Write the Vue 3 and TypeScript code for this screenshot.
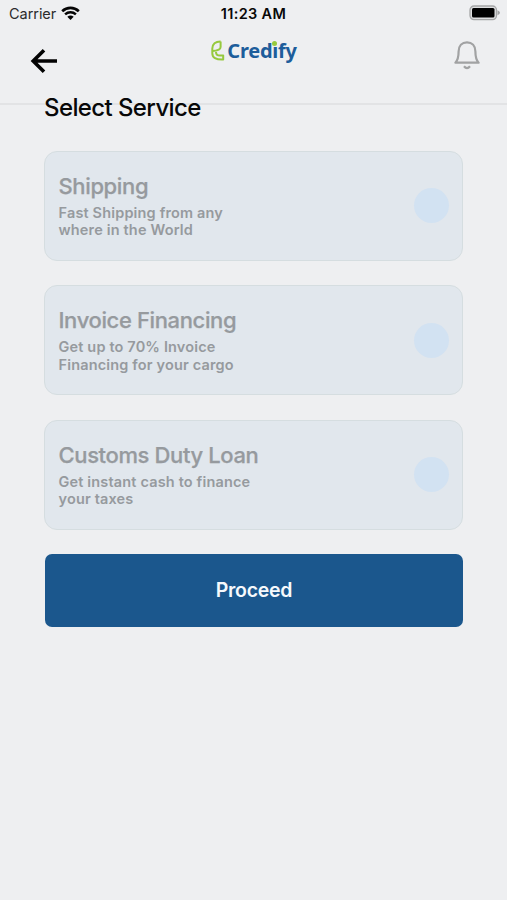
<script setup lang="ts">
import { ref } from 'vue'

interface Service {
  id: string
  title: string
  lines: string[]
}

const services: Service[] = [
  { id: 'shipping', title: 'Shipping', lines: ['Fast Shipping from any', 'where in the World'] },
  { id: 'invoice', title: 'Invoice Financing', lines: ['Get up to 70% Invoice', 'Financing for your cargo'] },
  { id: 'customs', title: 'Customs Duty Loan', lines: ['Get instant cash to finance', 'your taxes'] },
]

const selected = ref<string | null>(null)
</script>

<template>
  <div class="screen">
    <div class="status">
      <div class="carrier">
        <span>Carrier</span>
        <svg class="wifi" width="19" height="14" viewBox="0 0 19 14">
          <path d="M1.200 5.200C6 .7 13 .7 17.800 5.200" fill="none" stroke="#050505" stroke-width="2.700" />
          <path d="M4.100 8.400C7.200 5.600 11.800 5.600 14.900 8.400" fill="none" stroke="#050505" stroke-width="2.500" />
          <path d="M6.300 10.800Q9.500 8.200 12.700 10.800L9.500 14Z" fill="#050505" />
        </svg>
      </div>
      <span class="time">11:23 AM</span>
      <svg class="battery" width="31" height="16" viewBox="0 0 31 16">
        <rect x="1" y="1" width="26.500" height="13.600" rx="4" fill="#dedfe0" stroke="#a5a6a7" stroke-width="1.300" />
        <rect x="3" y="3" width="22.500" height="9.600" rx="1.500" fill="#000" />
        <path d="M28.500 5.300Q31 6.400 31 7.800T28.500 10.300Z" fill="#a0a1a2" />
      </svg>
    </div>

    <header class="header">
      <button class="icon back" aria-label="Back">
        <svg width="28" height="26" viewBox="0 0 28 26" fill="none" stroke="#030303" stroke-width="3.600">
          <path d="M27 13H3.500M14 2.200L3.200 13L14 23.800" />
        </svg>
      </button>
      <div class="logo">
        <svg width="15" height="22" viewBox="0 0 15 22" fill="none" stroke="#96c93d" stroke-width="2" stroke-linejoin="round">
          <path d="M10.600 1.500C5.500 1.400 2.300 4.200 2.300 8.600V13.200C2.300 17.600 5.800 19.800 13.200 19.500V15.600H10C7.200 15.600 6 14.200 6 12" />
          <path d="M10.600 1.500V7C10.600 9.400 8.500 10.700 2.300 10.900" />
        </svg>
        <span class="wordmark">Cred<span class="dotted">ı<i></i></span>fy</span>
      </div>
      <button class="icon bell" aria-label="Notifications">
        <svg width="26" height="29" viewBox="0 0 26 29" fill="none" stroke="#a1a2a3" stroke-width="2.200" stroke-linejoin="round">
          <path d="M1.400 21.700C3.800 19.200 4.600 16.800 4.600 10.500C4.600 4.800 8 1.400 13 1.400S21.400 4.800 21.400 10.500C21.400 16.800 22.200 19.200 24.600 21.700Z" />
          <path d="M10 25.300Q13 28.900 16 25.300" />
        </svg>
      </button>
    </header>

    <main class="content">
      <h1>Select Service</h1>
      <div class="cards">
        <section v-for="s in services" :key="s.id" class="card" @click="selected = s.id">
          <div class="copy">
            <h2>{{ s.title }}</h2>
            <p><span v-for="line in s.lines" :key="line">{{ line }}</span></p>
          </div>
          <span class="radio" :class="{ on: selected === s.id }"></span>
        </section>
      </div>
      <button class="proceed">Proceed</button>
    </main>
  </div>
</template>

<style>
body { background: #eeeff1; }
</style>

<style scoped>
.screen {
  box-sizing: border-box;
  min-height: 900px;
  background: #eeeff1;
  font-family: Inter, "Liberation Sans", sans-serif;
  color: #080808;
}
button { border: 0; padding: 0; font: inherit; background: none; }
svg { display: block; }
h1, h2, p { margin: 0; }
.status {
  box-sizing: border-box;
  height: 28px;
  padding: 0 7px 0 9px;
  display: grid;
  grid-template-columns: 1fr auto 1fr;
  align-items: center;
  font-size: 14.500px;
  line-height: 28px;
}
.carrier { display: flex; align-items: center; gap: 5px; color: #2b2b2c; }
.carrier span { letter-spacing: -0.050px; }
.wifi { margin-bottom: 2px; }
.time { font-weight: 600; font-size: 14.500px; letter-spacing: 0.320px; margin-right: 2px; white-space: nowrap; }
.battery { justify-self: end; margin-bottom: 2px; }
.header {
  box-sizing: border-box;
  height: 77px;
  border-bottom: 2px solid #e2e3e5;
  padding: 0 27px 0 30px;
  display: grid;
  grid-template-columns: 1fr auto 1fr;
  align-items: start;
}
.back { justify-self: start; margin-top: 20px; }
.bell { justify-self: end; margin-top: 13px; }
.logo { display: flex; align-items: flex-start; gap: 2px; margin: 12px 3px 0 0; }
.wordmark {
  font-family: "Noto Sans", sans-serif;
  font-size: 20px;
  line-height: 22px;
  font-weight: 700;
  letter-spacing: -0.250px;
  color: #1d5d9b;
}
.dotted { position: relative; }
.dotted i {
  position: absolute;
  left: 0;
  top: 4px;
  width: 5px;
  height: 5px;
  border-radius: 50%;
  background: #96c93d;
}
.content { padding: 0 44px; }
h1 { margin-top: -13px; font-size: 24px; line-height: 32px; font-weight: 500; letter-spacing: -0.600px; white-space: nowrap; }
.cards { margin-top: 27px; display: grid; gap: 24.400px; }
.card {
  box-sizing: border-box;
  height: 110px;
  border: 1.500px solid #d5dde0;
  border-radius: 13px;
  background: #e1e7ed;
  padding: 0 13px;
  display: flex;
  align-items: center;
  justify-content: space-between;
  color: #969a9e;
}
.copy { padding: 0 0 0.500px 0.500px; }
h2 { font-size: 22px; line-height: 28px; font-weight: 500; letter-spacing: -0.370px; -webkit-text-stroke: 0.250px; }
p { margin-top: 4px; font-size: 14.500px; line-height: 17.500px; font-weight: 600; letter-spacing: 0.160px; }
h2 { margin-top: -1px; }
p span { display: block; }
.radio { width: 35px; height: 35px; margin-bottom: 0.500px; border-radius: 50%; background: #d2e2f2; }
.radio.on { background: #1b578d; }
.proceed {
  display: block;
  width: 418px;
  height: 73px;
  margin: 24px 0 0 1px;
  border-radius: 7px;
  background: #1b578d;
  color: #f6f9fc;
  font-size: 19.500px;
  font-weight: 600;
  letter-spacing: -0.250px;
}
</style>
